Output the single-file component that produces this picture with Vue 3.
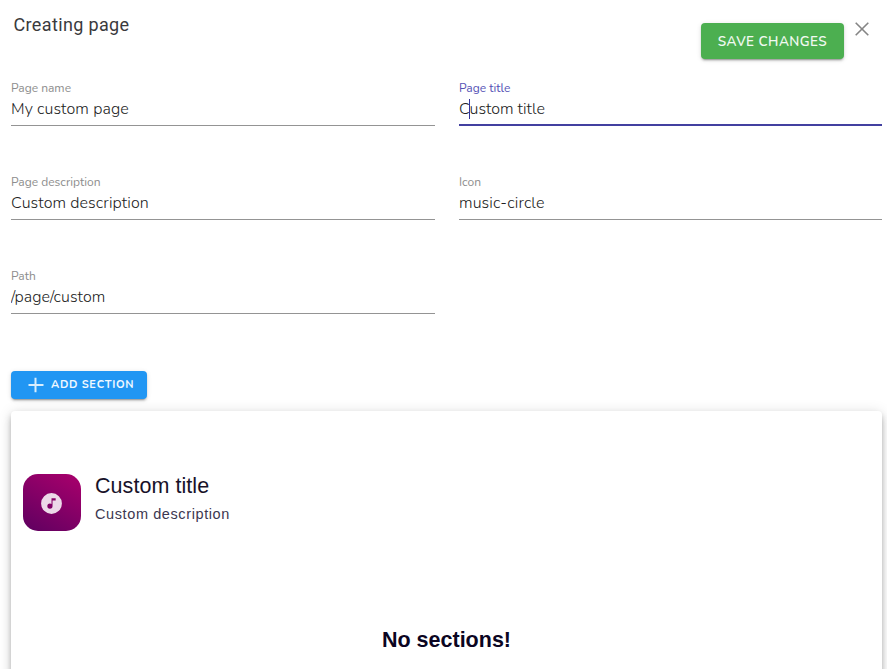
<script setup>
import { reactive } from 'vue'

const fields = reactive([
  { key: 'name', label: 'Page name', value: 'My custom page' },
  { key: 'title', label: 'Page title', value: 'Custom title', active: true },
  { key: 'description', label: 'Page description', value: 'Custom description' },
  { key: 'icon', label: 'Icon', value: 'music-circle' },
  { key: 'path', label: 'Path', value: '/page/custom' },
])
</script>

<template>
  <main class="editor">
    <header class="toolbar">
      <h1 class="heading">Creating page</h1>
      <button class="btn save">SAVE CHANGES</button>
      <button class="close" aria-label="Close">
        <svg viewBox="0 0 14 14" width="14" height="14"><path d="M.7.7l12.6 12.6M13.3.7L.7 13.3" /></svg>
      </button>
    </header>

    <section class="fields">
      <label v-for="f in fields" :key="f.key" class="field" :class="[f.key, { active: f.active }]">
        <span class="label">{{ f.label }}</span>
        <input v-model="f.value" class="input" type="text" spellcheck="false" />
        <i v-if="f.active" class="caret"></i>
      </label>
    </section>

    <button class="btn add">
      <svg viewBox="0 0 16 16" width="16" height="16"><path d="M7.500 .8v14.400M.5 8h15" /></svg>
      <span>ADD SECTION</span>
    </button>

    <section class="preview">
      <div class="page-head">
        <div class="badge">
          <svg viewBox="0 0 24 24" width="25" height="25">
            <path d="M16 9V7h-4v5.500c-.42-.31-.93-.5-1.500-.5A2.500 2.500 0 0 0 8 14.500a2.500 2.500 0 0 0 2.500 2.500a2.500 2.500 0 0 0 2.500-2.500V9h3M12 2a10 10 0 0 1 10 10a10 10 0 0 1-10 10A10 10 0 0 1 2 12A10 10 0 0 1 12 2z" />
          </svg>
        </div>
        <div>
          <h2 class="page-title">{{ fields[1].value }}</h2>
          <p class="page-desc">{{ fields[2].value }}</p>
        </div>
      </div>
      <h2 class="empty">No sections!</h2>
    </section>
  </main>
</template>

<style>
body { background: #fff; overflow: hidden; }
</style>

<style scoped>
.editor {
  box-sizing: border-box;
  height: 669px;
  padding: 0 5px 0 11px;
  overflow: hidden;
  display: flex;
  flex-direction: column;
  align-items: stretch;
  font-family: Nunito, Lato, sans-serif;
}
h1, h2, p { margin: 0; font-weight: 400; }
button { border: 0; padding: 0; font-family: inherit; }
.toolbar { display: flex; align-items: flex-start; height: 80px; flex: none; }
.heading {
  flex: 1;
  padding: 14px 0 0 2.500px;
  font: 400 18px/22px Roboto, sans-serif;
  letter-spacing: 0.36px;
  color: #3a3a3d;
}
.btn {
  border-radius: 4px;
  color: #fff;
  box-shadow: 0 3px 1px -2px rgba(0, 0, 0, .2), 0 2px 2px rgba(0, 0, 0, .14), 0 1px 5px rgba(0, 0, 0, .12);
}
.save {
  width: 143px;
  height: 36px;
  margin-top: 23px;
  background: #4caf50;
  color: #f1f9f1;
  font-size: 13.500px;
  font-weight: 600;
  letter-spacing: 0.45px;
}
.close { display: flex; margin: 22px 13.500px 0 10.500px; background: none; }
.close path { stroke: #858585; stroke-width: 1.6; fill: none; }
.fields {
  flex: none;
  display: grid;
  grid-template-columns: 424px 423px;
  column-gap: 24px;
  grid-auto-rows: 94px;
  height: 291px;
}
.field { position: relative; display: flex; flex-direction: column; align-items: stretch; }
.label { font-size: 12px; line-height: 16px; color: #8d8d8d; }
.input {
  box-sizing: border-box;
  width: 100%;
  height: 30px;
  border: 0;
  border-bottom: 1px solid #949494;
  border-radius: 0;
  padding: 0 0 4px;
  outline: 0;
  background: none;
  font-family: inherit;
  font-size: 16px;
  font-weight: 300;
  letter-spacing: 0.1px;
  color: #222;
}
.title .input { letter-spacing: 0; }
.active .label { color: #5552b5; }
.active .input { border-bottom: 2px solid #4340a0; padding-bottom: 3px; }
.caret { position: absolute; left: 10px; top: 19px; width: 1px; height: 20px; background: #34349b; }
.add {
  flex: none;
  width: 136px;
  height: 28px;
  display: flex;
  align-items: center;
  padding-left: 17px;
  gap: 7px;
  background: #2196f3;
  font-size: 11px;
  font-weight: 700;
  letter-spacing: 0.7px;
}
.add span { position: relative; top: -1px; color: #f0f8ff; }
.add path { stroke: #d8edfd; stroke-width: 2; fill: none; }
.preview {
  flex: none;
  height: 300px;
  margin-top: 12px;
  border-radius: 4px;
  background: #fff;
  color: #0b0522;
  font-family: "Liberation Sans", Arial, sans-serif;
  box-shadow: 0 3px 5px -1px rgba(0, 0, 0, .2), 0 5px 8px rgba(0, 0, 0, .14), 0 1px 14px rgba(0, 0, 0, .12);
}
.page-head { display: flex; gap: 14px; padding: 63px 12px 0; }
.badge {
  display: flex;
  align-items: center;
  justify-content: center;
  width: 58px;
  height: 57px;
  border-radius: 15px;
  background: linear-gradient(30deg, #5e0060, #aa006c);
}
.badge svg { position: relative; left: -0.5px; top: 0.5px; }
.badge path { fill: #ecd9e8; }
.page-title { font-size: 21.500px; line-height: 24px; letter-spacing: 0.06px; color: #181229; }
.page-desc { margin-top: 6px; font-size: 14.500px; line-height: 20px; letter-spacing: 0.6px; color: #3c3750; }
.empty { margin-top: 96px; text-align: center; font-size: 21.500px; line-height: 26px; font-weight: 700; }
</style>
